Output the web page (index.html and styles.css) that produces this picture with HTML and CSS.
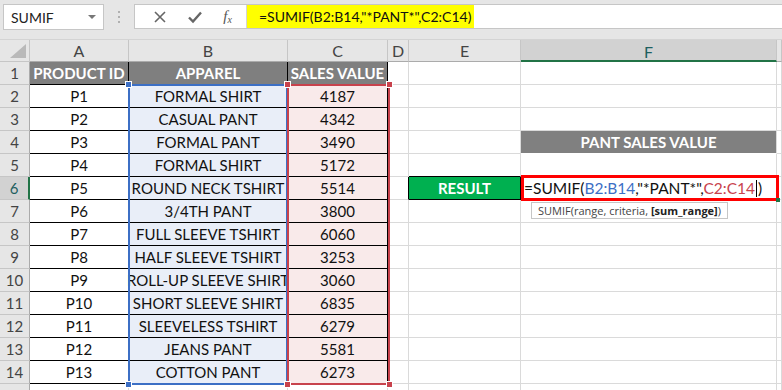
FILE: index.html
```html
<!DOCTYPE html>
<html>
<head>
<meta charset="utf-8">
<link rel="stylesheet" href="styles.css">
</head>
<body>
<div class="toolbar">
  <div class="namebox"><span>SUMIF</span><span class="dd"></span></div>
  <div class="sep"><span class="dots"></span></div>
  <div class="fbar">
    <div class="fbtns">
      <svg class="ic" width="14" height="14" viewBox="0 0 14 14"><path d="M2 2L12 12M12 2L2 12" stroke="#666" stroke-width="1.6" fill="none"/></svg>
      <svg class="ic" width="16" height="14" viewBox="0 0 16 14"><path d="M2 7.5L6 11.5L14 2.5" stroke="#666" stroke-width="2.4" fill="none"/></svg>
      <span class="fx">f<sub>x</sub></span>
    </div>
    <div class="finput"><span class="hl">=SUMIF(B2:B14,"*PANT*",C2:C14)</span></div>
  </div>
</div>
<div class="sheet">
  <div class="grid">
    <div class="corner"><svg width="16" height="14" viewBox="0 0 16 14"><path d="M16 0L16 14L0 14Z" fill="#b9b9b9"/></svg></div>
    <div class="ch">A</div><div class="ch">B</div><div class="ch">C</div><div class="ch">D</div><div class="ch">E</div><div class="ch sel">F</div><div class="ch"></div>

    <div class="rh">1</div><div class="c hd">PRODUCT ID</div><div class="c hd">APPAREL</div><div class="c hd">SALES VALUE</div><div class="c"></div><div class="c"></div><div class="c"></div><div class="c"></div>
    <div class="rh">2</div><div class="c d">P1</div><div class="c d b">FORMAL SHIRT</div><div class="c d r">4187</div><div class="c"></div><div class="c"></div><div class="c"></div><div class="c"></div>
    <div class="rh">3</div><div class="c d">P2</div><div class="c d b">CASUAL PANT</div><div class="c d r">4342</div><div class="c"></div><div class="c"></div><div class="c"></div><div class="c"></div>
    <div class="rh">4</div><div class="c d">P3</div><div class="c d b">FORMAL PANT</div><div class="c d r">3490</div><div class="c"></div><div class="c"></div><div class="c pant">PANT SALES VALUE</div><div class="c"></div>
    <div class="rh">5</div><div class="c d">P4</div><div class="c d b">FORMAL SHIRT</div><div class="c d r">5172</div><div class="c"></div><div class="c eb"></div><div class="c"></div><div class="c"></div>
    <div class="rh selr">6</div><div class="c d">P5</div><div class="c d b">ROUND NECK TSHIRT</div><div class="c d r">5514</div><div class="c er"></div><div class="c result">RESULT</div><div class="c"></div><div class="c"></div>
    <div class="rh">7</div><div class="c d">P6</div><div class="c d b">3/4TH PANT</div><div class="c d r">3800</div><div class="c"></div><div class="c"></div><div class="c"></div><div class="c"></div>
    <div class="rh">8</div><div class="c d">P7</div><div class="c d b">FULL SLEEVE TSHIRT</div><div class="c d r">6060</div><div class="c"></div><div class="c"></div><div class="c"></div><div class="c"></div>
    <div class="rh">9</div><div class="c d">P8</div><div class="c d b">HALF SLEEVE TSHIRT</div><div class="c d r">3253</div><div class="c"></div><div class="c"></div><div class="c"></div><div class="c"></div>
    <div class="rh">10</div><div class="c d">P9</div><div class="c d b">ROLL-UP SLEEVE SHIRT</div><div class="c d r">3060</div><div class="c"></div><div class="c"></div><div class="c"></div><div class="c"></div>
    <div class="rh">11</div><div class="c d">P10</div><div class="c d b">SHORT SLEEVE SHIRT</div><div class="c d r">6835</div><div class="c"></div><div class="c"></div><div class="c"></div><div class="c"></div>
    <div class="rh">12</div><div class="c d">P11</div><div class="c d b">SLEEVELESS TSHIRT</div><div class="c d r">6279</div><div class="c"></div><div class="c"></div><div class="c"></div><div class="c"></div>
    <div class="rh">13</div><div class="c d">P12</div><div class="c d b">JEANS PANT</div><div class="c d r">5581</div><div class="c"></div><div class="c"></div><div class="c"></div><div class="c"></div>
    <div class="rh">14</div><div class="c d">P13</div><div class="c d b">COTTON PANT</div><div class="c d r">6273</div><div class="c"></div><div class="c"></div><div class="c"></div><div class="c"></div>
    <div class="rh"></div><div class="c"></div><div class="c"></div><div class="c"></div><div class="c"></div><div class="c"></div><div class="c"></div><div class="c"></div>
  </div>
  <div class="grid layer">
    <div class="rng rngB"><i class="h tl"></i><i class="h bl"></i></div>
    <div class="rng rngC"><i class="h tl"></i><i class="h tr"></i><i class="h bl"></i><i class="h br"></i></div>
    <div class="edit">
      <span>=SUMIF(<span class="fb">B2:B14</span>,"*PANT*",<span class="fr">C2:C14</span><span class="caret"></span>)</span>
      <i class="fill"></i>
      <div class="tip">SUMIF(range, criteria, <b>[sum_range]</b>)</div>
    </div>
  </div>
</div>
</body>
</html>
```
FILE: styles.css
```css
body {
  margin: 0;
  width: 782px;
  height: 390px;
  overflow: hidden;
  background: #fff;
  font-family: Lato, "Open Sans", sans-serif;
}
.toolbar {
  height: 40px;
  box-sizing: border-box;
  background: #e6e6e6;
  display: flex;
  align-items: flex-start;
  padding: 4px 0 0 3px;
  border-bottom: 1px solid #d4d4d4;
}
.namebox {
  width: 101px;
  height: 26px;
  box-sizing: border-box;
  background: #fff;
  border: 1px solid #c6c6c6;
  display: flex;
  align-items: center;
  justify-content: space-between;
  padding: 0 7px 0 7px;
  font-size: 14px;
  color: #222;
}
.dd {
  width: 0;
  height: 0;
  border-left: 4px solid transparent;
  border-right: 4px solid transparent;
  border-top: 4px solid #777;
}
.sep {
  width: 30px;
  height: 26px;
  display: flex;
  align-items: center;
  justify-content: center;
}
.dots {
  width: 2px;
  height: 12px;
  background: repeating-linear-gradient(#b0b0b0 0 2px, transparent 2px 5px);
}
.fbar {
  flex: 1;
  height: 25px;
  box-sizing: border-box;
  display: flex;
  background: #fff;
  border: 1px solid #c6c6c6;
  border-right: none;
}
.fbtns {
  width: 112px;
  display: flex;
  align-items: center;
  justify-content: space-around;
  padding: 0 4px 0 8px;
  box-sizing: border-box;
  border-right: 1px solid #d4d4d4;
}
.fx {
  font-family: "Liberation Serif", serif;
  font-style: italic;
  font-size: 15px;
  color: #555;
}
.fx sub { font-size: 10px; vertical-align: -2px; }
.finput {
  flex: 1;
  display: flex;
}
.hl {
  background: #ffff00;
  height: 100%;
  display: flex;
  align-items: center;
  padding: 0 3px 0 12px;
  font-size: 14px;
  color: #111;
  white-space: nowrap;
}
.sheet {
  position: relative;
}
.grid {
  display: grid;
  grid-template-columns: 30px 99px 159px 100px 21px 112px 256px 1fr;
  grid-template-rows: 22px repeat(15, 23px);
}
.layer {
  position: absolute;
  inset: 0;
  pointer-events: none;
}
.grid > div {
  box-sizing: border-box;
  min-width: 0;
}
.corner {
  background: #e6e6e6;
  border-right: 1px solid #c6c6c6;
  border-bottom: 1px solid #c6c6c6;
  display: flex;
  align-items: flex-end;
  justify-content: flex-end;
  padding: 0 3px 3px 0;
}
.ch {
  background: #e6e6e6;
  border-right: 1px solid #c6c6c6;
  border-bottom: 1px solid #ababab;
  font-size: 16px;
  color: #444;
  display: flex;
  align-items: center;
  justify-content: center;
}
.ch.sel {
  background: #d2d2d2;
  border-bottom: 2px solid #217346;
  color: #1e5f5f;
  padding-top: 2px;
}
.rh {
  background: #e6e6e6;
  border-right: 1px solid #ababab;
  border-bottom: 1px solid #c6c6c6;
  font-size: 15px;
  color: #444;
  display: flex;
  align-items: center;
  justify-content: center;
}
.rh.selr {
  background: #d2d2d2;
  border-right: 2px solid #217346;
  color: #1e5f5f;
}
.c {
  border-right: 1px solid #dadada;
  border-bottom: 1px solid #dadada;
  display: flex;
  align-items: center;
  justify-content: center;
  font-size: 15px;
  color: #111;
  white-space: nowrap;
}
.c.d {
  border-right-color: #000;
  border-bottom-color: #000;
}
.c.hd {
  background: #7f7f7f;
  color: #fff;
  font-weight: bold;
  border-right-color: #000;
  border-bottom-color: #000;
}
.c.b { background: #e9eef8; }
.c.r { background: #f9eaea; }
.c.eb { border-bottom-color: #000; }
.c.er { border-right-color: #000; }
.c.pant {
  background: #808080;
  color: #fff;
  font-weight: bold;
  font-size: 15px;
  border-bottom-color: #fff;
}
.c.result {
  background: #00b050;
  color: #fff;
  font-weight: bold;
  border-right-color: #000;
  border-bottom-color: #000;
}
.rng {
  position: relative;
}
.rngB {
  grid-column: 3;
  grid-row: 3 / 16;
  margin: -1px 0 -1px -1px;
  border: 2px solid #3c6fc5;
}
.rngC {
  grid-column: 4;
  grid-row: 3 / 16;
  margin: -1px -2px -1px -1px;
  border: 2px solid #c8424c;
}
.h {
  position: absolute;
  width: 5px;
  height: 5px;
  border: 1px solid #fff;
}
.rngB .h { background: #3c6fc5; }
.rngC .h { background: #c8424c; }
.h.tl { left: -5px; top: -5px; }
.h.tr { right: -5px; top: -5px; }
.h.bl { left: -5px; bottom: -5px; }
.h.br { right: -5px; bottom: -5px; }
.edit {
  grid-column: 7;
  grid-row: 7;
  margin: -2px -2px -1px 0;
  border: 3px solid #ff0000;
  background: #fff;
  position: relative;
  display: flex;
  align-items: center;
  font-size: 15.5px;
  color: #111;
  white-space: nowrap;
}
.fb { color: #3c6fc5; }
.fr { color: #c8424c; }
.caret {
  display: inline-block;
  width: 1px;
  height: 17px;
  background: #000;
  vertical-align: -3px;
  margin: 0 1px;
}
.fill {
  position: absolute;
  right: -4px;
  bottom: -4px;
  width: 4px;
  height: 4px;
  background: #217346;
}
.tip {
  position: absolute;
  left: 7px;
  top: 24px;
  height: 17px;
  box-sizing: border-box;
  padding: 0 6px;
  background: #fff;
  border: 1px solid #c6c6c6;
  font-family: "Open Sans", sans-serif;
  font-size: 11px;
  color: #444;
  line-height: 15px;
}
.tip b { color: #222; }
```
